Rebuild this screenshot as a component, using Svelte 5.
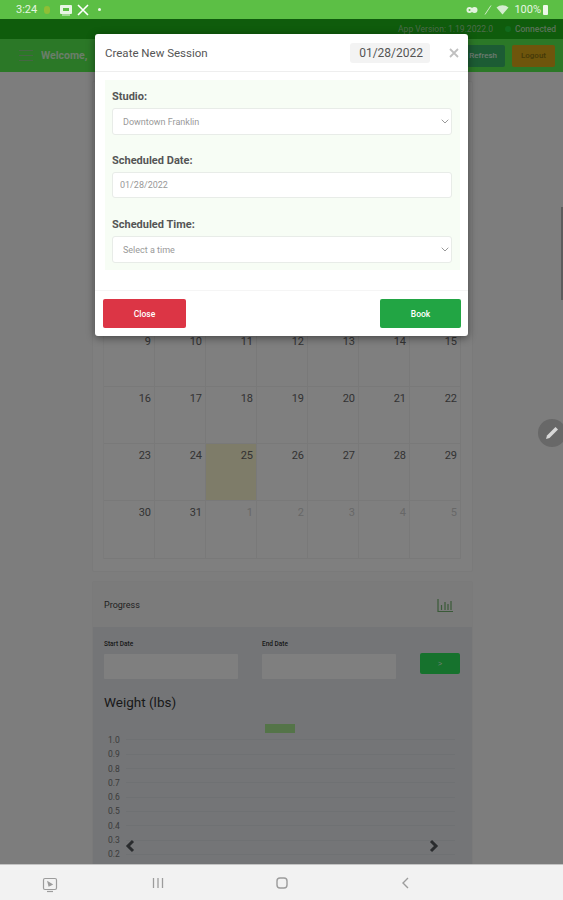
<script>
  // the first calendar rows sit behind the modal, only these show
  const weeks = [
    [9, 10, 11, 12, 13, 14, 15],
    [16, 17, 18, 19, 20, 21, 22],
    [23, 24, 25, 26, 27, 28, 29],
    [30, 31, 1, 2, 3, 4, 5]
  ];
  const ticks = ['1.0', '0.9', '0.8', '0.7', '0.6', '0.5', '0.4', '0.3', '0.2'];
</script>

<div class="device">
  <div class="status">
    <span class="clock">3:24</span>
    <span class="notif-dot"></span>
    <svg class="st" width="14" height="12" viewBox="0 0 14 12"><rect x="1" y="1" width="12" height="9" rx="1" fill="#e8f5e4"/><path d="M4 4h6v3H4z" fill="#5cbf45"/><path d="M3 11h8" stroke="#e8f5e4"/></svg>
    <svg class="st" width="12" height="12" viewBox="0 0 12 12"><path d="M1 1l10 10M11 1L1 11" stroke="#fff" stroke-width="1.6" fill="none"/></svg>
    <span class="tiny-dot"></span>
    <span class="grow"></span>
    <svg class="st key" width="12" height="8" viewBox="0 0 12 8"><circle cx="3.500" cy="4" r="3" fill="#e3f3df"/><circle cx="8.500" cy="4" r="3" fill="#e3f3df"/><circle cx="3.500" cy="4" r="1" fill="#5cbf45"/></svg>
    <svg class="st" width="8" height="10" viewBox="0 0 8 10"><path d="M1 9.500L7 .5" stroke="#cfeac8" fill="none"/></svg>
    <svg class="st" width="13" height="11" viewBox="0 0 13 11"><path d="M.5 3.500a9 9 0 0 1 12 0L6.500 10.500z" fill="#d5edd0"/></svg>
    <span class="pct">100%</span>
    <span class="battery"></span>
  </div>

  <div class="webview">
    <div class="info-bar">
      <span>App Version: 1.19.2022.0</span>
      <span class="led"></span>
      <b>Connected</b>
    </div>
    <div class="nav-bar">
      <div class="burger"><i></i><i></i><i></i></div>
      <span class="welcome">Welcome,</span>
      <span class="grow"></span>
      <button class="refresh">Refresh</button>
      <button class="logout">Logout</button>
    </div>

    <main>
      <section class="card calendar">
        <div class="cal-top"></div>
        <div class="cal-grid">
          {#each weeks as week, w}
            {#each week as n, d}
              <div class="day" class:other={w === 3 && d > 1} class:today={w === 2 && d === 2}>{n}</div>
            {/each}
          {/each}
        </div>
      </section>

      <section class="card progress">
        <header>
          <span>Progress</span>
          <svg width="17" height="15" viewBox="0 0 17 15" fill="none" stroke="#74b470" stroke-width="1.200"><path d="M1 1v12.500h15"/><path d="M4.500 12V7M8 12V4M11 12V6M14 12V3"/></svg>
        </header>
        <div class="range">
          <label>Start Date<input type="text" /></label>
          <label>End Date<input type="text" /></label>
          <button class="go">&gt;</button>
        </div>
        <h2>Weight (lbs)</h2>
        <div class="legend"></div>
        <div class="chart">
          {#each ticks as t}
            <div class="tick"><span>{t}</span><i></i></div>
          {/each}
          <svg class="caret left" width="12" height="14" viewBox="0 0 12 14"><path d="M9 2L4 7l5 5" fill="none" stroke="#55585c" stroke-width="3"/></svg>
          <svg class="caret right" width="12" height="14" viewBox="0 0 12 14"><path d="M3 2l5 5-5 5" fill="none" stroke="#55585c" stroke-width="3"/></svg>
        </div>
      </section>
    </main>

    <div class="backdrop">
      <div class="modal">
        <div class="modal-head">
          <span class="title">Create New Session</span>
          <span class="chip">01/28/2022</span>
          <svg class="close-x" width="10" height="10" viewBox="0 0 10 10"><path d="M1 1l8 8M9 1L1 9" stroke="#c0c0c0" stroke-width="1.800" fill="none"/></svg>
        </div>
        <div class="modal-body">
          <div class="panel">
            <div class="field">
              <label for="studio">Studio:</label>
              <div class="select-wrap">
                <select id="studio"><option>Downtown Franklin</option></select>
                <svg width="8" height="5" viewBox="0 0 8 5"><path d="M.7.7L4 4l3.300-3.300" fill="none" stroke="#999"/></svg>
              </div>
            </div>
            <div class="field">
              <label for="date">Scheduled Date:</label>
              <input id="date" class="date" type="text" value="01/28/2022" />
            </div>
            <div class="field">
              <label for="time">Scheduled Time:</label>
              <div class="select-wrap">
                <select id="time"><option>Select a time</option></select>
                <svg width="8" height="5" viewBox="0 0 8 5"><path d="M.7.7L4 4l3.300-3.300" fill="none" stroke="#999"/></svg>
              </div>
            </div>
          </div>
        </div>
        <div class="modal-foot">
          <button class="btn-close">Close</button>
          <button class="btn-book">Book</button>
        </div>
      </div>

      <div class="pen">
        <svg width="16" height="16" viewBox="0 0 16 16"><path d="M2 14l1-3.500L11.500 2 14 4.500 5.500 13z" fill="#d8d8d8"/></svg>
      </div>
      <div class="scroll-thumb"></div>
    </div>
  </div>

  <div class="android-nav">
    <svg class="shot" width="16" height="16" viewBox="0 0 16 16" fill="none" stroke="#9c9c9c" stroke-width="1.200"><rect x="1.500" y="1.500" width="13" height="11" rx="1.500"/><path d="M6 5l4 2.500L7 9z" fill="#9c9c9c"/><path d="M5 14.500h6"/></svg>
    <svg class="lines" width="12" height="12" viewBox="0 0 12 12" stroke="#9c9c9c" stroke-width="1.300"><path d="M1.500 1v10M6 1v10M10.500 1v10"/></svg>
    <svg class="home" width="12" height="12" viewBox="0 0 12 12" fill="none" stroke="#9c9c9c" stroke-width="1.400"><rect x="1" y="1" width="10" height="10" rx="3"/></svg>
    <svg class="back" width="9" height="12" viewBox="0 0 9 12" fill="none" stroke="#9c9c9c" stroke-width="1.400"><path d="M7 1L2 6l5 5"/></svg>
  </div>
</div>

<style>
  :global(body) {
    margin: 0;
    overflow: hidden;
    font-family: Roboto, "Liberation Sans", sans-serif;
  }

  .device {
    width: 563px;
    height: 900px;
    display: flex;
    flex-direction: column;
    overflow: hidden;
  }

  .grow { flex: 1; }

  /* status bar */
  .status {
    flex: 0 0 19px;
    display: flex;
    align-items: center;
    padding: 0 15px 0 16px;
    background: #5cbf45;
    color: #e6f5e1;
    font-size: 11px;
    box-sizing: border-box;
  }
  .clock { width: 28px; }
  .notif-dot {
    width: 6px;
    height: 8px;
    border-radius: 3px;
    background: #8fbf35;
    margin-right: 9px;
  }
  .st { display: block; margin-right: 4px; }
  .key { margin-right: 6px; }
  .tiny-dot {
    width: 3px;
    height: 3px;
    border-radius: 50%;
    background: #eef8ea;
    margin-left: 5px;
  }
  .pct { margin-left: 1px; font-size: 11px; }
  .battery {
    width: 5px;
    height: 10px;
    background: #eef8ea;
    border-radius: 1px;
    margin-left: 2px;
  }

  .webview {
    flex: 1;
    position: relative;
    overflow: hidden;
    background: #fbfbfb;
    min-height: 0;
  }

  .info-bar {
    height: 20px;
    display: flex;
    align-items: center;
    justify-content: flex-end;
    padding-right: 7px;
    background: #1eb818;
    color: #9ad697;
    font-size: 8.500px;
  }
  .led {
    width: 6px;
    height: 6px;
    border-radius: 50%;
    background: #22d33a;
    margin: 0 4px 0 12px;
  }
  .info-bar b { color: #b4e2b0; font-weight: 500; }

  .nav-bar {
    height: 33px;
    display: flex;
    align-items: center;
    padding: 0 8px 0 19px;
    background: #56f04e;
    box-sizing: border-box;
  }
  .burger { width: 14px; margin-right: 8px; }
  .burger i {
    display: block;
    height: 1px;
    background: #8ccc88;
    margin: 4px 0;
  }
  .welcome {
    font-size: 10.500px;
    font-weight: 700;
    color: #ffffff;
    opacity: 0.75;
  }
  .refresh, .logout {
    border: 0;
    font: 500 8px Roboto, sans-serif;
    border-radius: 2px;
    height: 22px;
  }
  .refresh {
    width: 66px;
    background: #38b868;
    color: #d8f4e0;
    text-align: right;
    padding-right: 8px;
    margin-right: 7px;
  }
  .logout {
    width: 43px;
    background: #dcaa18;
    color: #8a7410;
  }

  main {
    width: 381px;
    margin: 9px 0 0 92px;
    display: flex;
    flex-direction: column;
    gap: 9px;
  }

  .card {
    background: #ffffff;
    border: 1px solid #f4f4f4;
    border-radius: 2px;
    box-sizing: border-box;
  }

  /* calendar */
  .calendar { padding: 0 10px 12px; }
  .cal-top { height: 247.600px; }
  .cal-grid {
    display: grid;
    grid-template-columns: repeat(7, 51px);
    grid-auto-rows: 57.300px;
    border-left: 1px solid #f6f6f6;
  }
  .day {
    border-right: 1px solid #f3f3f3;
    border-bottom: 1px solid #f3f3f3;
    box-sizing: border-box;
    text-align: right;
    padding: 5px 3px 0 0;
    font-size: 11px;
    line-height: 13px;
    color: #666;
  }
  .day.other { color: #cfcfcf; }
  .day.today { background: #fdf8d2; }

  /* progress */
  .progress { background: #e8ebef; height: 300px; }
  .progress header {
    height: 45px;
    display: flex;
    align-items: center;
    justify-content: space-between;
    padding: 2px 18px 0 11px;
    background: #f6f6f6;
    font-size: 9px;
    color: #444;
    box-sizing: border-box;
  }
  .range {
    display: flex;
    align-items: flex-start;
    padding: 13px 12px 0 11px;
  }
  .range label {
    width: 134px;
    margin-right: 24px;
    font-size: 6.500px;
    font-weight: 500;
    color: #333;
  }
  .range input {
    display: block;
    width: 100%;
    height: 25px;
    margin-top: 6px;
    border: 0;
    border-radius: 1px;
    background: #fff;
    box-sizing: border-box;
  }
  .go {
    width: 40px;
    height: 21px;
    margin-top: 13px;
    border: 0;
    border-radius: 2px;
    background: #2ce45a;
    color: #eaffea;
    font-size: 7px;
  }
  h2 {
    margin: 14px 0 0 11px;
    font-size: 13.500px;
    line-height: 18px;
    font-weight: 400;
    color: #333;
  }
  .legend {
    width: 30px;
    height: 9px;
    margin: 13px 0 0 172px;
    background: #a8e890;
  }
  .chart {
    position: relative;
    margin: 0 17px 0 15px;
  }
  .tick {
    height: 14.300px;
    display: flex;
    align-items: center;
    font-size: 8.500px;
    color: #777;
  }
  .tick span { width: 18px; }
  .tick i { flex: 1; height: 1px; background: #dfe2e6; }
  .caret { position: absolute; top: 106px; }
  .caret.left { left: 16px; }
  .caret.right { right: 15px; }

  /* modal */
  .backdrop {
    position: absolute;
    inset: 0;
    background: rgba(0, 0, 0, 0.5);
  }
  .modal {
    width: 373px;
    height: 302px;
    margin: 15px auto 0;
    display: flex;
    flex-direction: column;
    background: #fff;
    border-radius: 3px;
    box-shadow: 0 2px 8px rgba(0, 0, 0, 0.45);
  }
  .modal-head {
    flex: 0 0 38px;
    display: flex;
    align-items: center;
    padding: 0 9px 0 10px;
    border-bottom: 1px solid #eee;
    box-sizing: border-box;
  }
  .title {
    flex: 1;
    font-size: 11.500px;
    color: #555;
  }
  .chip {
    padding: 3px 7px 3px 9px;
    background: #f3f3f3;
    border-radius: 3px;
    font-size: 12px;
    line-height: 14px;
    color: #555;
  }
  .close-x { margin: 0 0 0 19px; }
  .modal-body {
    flex: 0 0 219px;
    padding: 8px 8px 0 10px;
    box-sizing: border-box;
    border-bottom: 1px solid #f5f5f5;
  }
  .panel {
    height: 190px;
    padding: 9px 8px 0 7px;
    background: #f7fdf5;
    box-sizing: border-box;
    display: flex;
    flex-direction: column;
    gap: 12px;
  }
  .field { height: 52px; }
  .field label {
    display: block;
    height: 19px;
    font-size: 11px;
    line-height: 15px;
    font-weight: 700;
    color: #555;
  }
  .select-wrap { position: relative; }
  .select-wrap svg { position: absolute; right: 3px; top: 11px; }
  select, .date {
    display: block;
    width: 340px;
    height: 27px;
    margin: 0;
    border: 1px solid #e8ece8;
    border-radius: 3px;
    background: #fff;
    box-sizing: border-box;
    font: 9px Roboto, sans-serif;
    color: #999;
    appearance: none;
    padding: 0 10px;
  }
  .date { padding: 0 7px; height: 26px; }
  .modal-foot {
    flex: 1;
    display: flex;
    justify-content: space-between;
    padding: 8px 7px 0 8px;
  }
  .modal-foot button {
    height: 29px;
    border: 0;
    border-radius: 2px;
    font: 500 8.500px Roboto, sans-serif;
    color: #fff;
  }
  .btn-close { width: 83px; background: #dc3545; }
  .btn-book { width: 81px; background: #22a544; }

  .pen {
    position: absolute;
    left: 538px;
    top: 400px;
    width: 28px;
    height: 28px;
    border-radius: 50%;
    background: #686868;
    display: flex;
    align-items: center;
    justify-content: center;
  }
  .scroll-thumb {
    position: absolute;
    right: 0;
    top: 188px;
    width: 2px;
    height: 93px;
    background: #5c5c5c;
  }

  .android-nav {
    flex: 0 0 36px;
    position: relative;
    background: #f2f2f2;
    border-top: 1px solid #c4c4c4;
    box-sizing: border-box;
  }
  .android-nav svg { position: absolute; top: 12px; }
  .shot { left: 42px; }
  .lines { left: 152px; }
  .home { left: 276px; }
  .back { left: 401px; }
</style>
